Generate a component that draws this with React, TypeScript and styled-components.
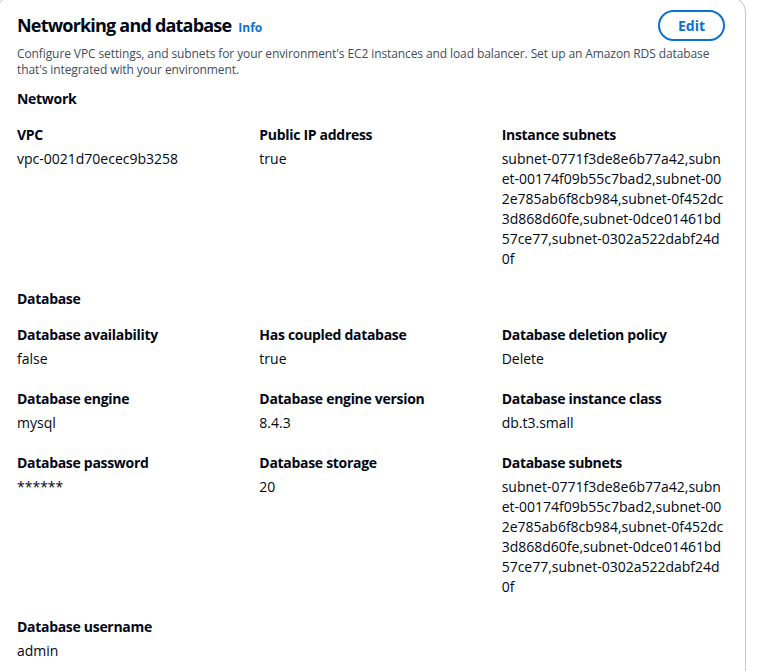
import React from 'react';
import styled, { createGlobalStyle } from 'styled-components';

const GlobalStyle = createGlobalStyle`
  html, body {
    margin: 0;
    padding: 0;
    background: #ffffff;
    overflow: hidden;
  }
  body {
    font-family: "Open Sans", "Noto Sans", Arial, sans-serif;
    color: #000716;
  }
`;

const Page = styled.div`
  padding: 0 20px 0 0;
`;

const Card = styled.section`
  margin: -4px 0 0 -4px;
  border: 1px solid #c6c6cd;
  border-radius: 16px;
  padding: 12px 21px 24px 20px;
  min-height: 700px;
`;

const Header = styled.div`
  display: flex;
  align-items: flex-start;
  justify-content: space-between;
`;

const TitleRow = styled.div`
  display: flex;
  align-items: baseline;
  gap: 7px;
  padding-top: 4px;
`;

const Title = styled.h2`
  margin: 0;
  font-size: 18px;
  line-height: 24px;
  font-weight: 700;
  letter-spacing: -0.8px;
`;

const InfoLink = styled.a`
  font-size: 12px;
  font-weight: 700;
  color: #0972d3;
  text-decoration: none;
`;

const Description = styled.p`
  margin: 5px 0 0;
  font-size: 12px;
  line-height: 16px;
  color: #414d5c;
  letter-spacing: -0.1px;
`;

const EditButton = styled.button`
  font-family: inherit;
  font-size: 14px;
  font-weight: 700;
  line-height: 19px;
  color: #0972d3;
  background: #ffffff;
  border: 2px solid #0972d3;
  border-radius: 20px;
  padding: 4px 18px;
  margin-top: 1px;
  margin-right: -1px;
  cursor: pointer;
`;

const SectionTitle = styled.h3<{ $first?: boolean }>`
  margin: ${(p) => (p.$first ? '11px' : '20px')} 0 16px;
  font-size: 14px;
  line-height: 20px;
  font-weight: 700;
  letter-spacing: -0.3px;
`;

const Grid = styled.div`
  display: grid;
  grid-template-columns: repeat(3, 1fr);
  column-gap: 20px;
  row-gap: 20px;
`;

const Pair = styled.div`
  display: flex;
  flex-direction: column;
  gap: 4px;
  min-width: 0;
`;

const Label = styled.div`
  font-size: 14px;
  line-height: 20px;
  font-weight: 700;
  letter-spacing: -0.3px;
`;

const Value = styled.div`
  font-size: 14px;
  line-height: 20px;
  word-break: break-all;
`;

const subnets =
  'subnet-0771f3de8e6b77a42,subnet-00174f09b55c7bad2,subnet-002e785ab6f8cb984,subnet-0f452dc3d868d60fe,subnet-0dce01461bd57ce77,subnet-0302a522dabf24d0f';

const network = [
  { label: 'VPC', value: 'vpc-0021d70ecec9b3258' },
  { label: 'Public IP address', value: 'true' },
  { label: 'Instance subnets', value: subnets },
];

const database = [
  { label: 'Database availability', value: 'false' },
  { label: 'Has coupled database', value: 'true' },
  { label: 'Database deletion policy', value: 'Delete' },
  { label: 'Database engine', value: 'mysql' },
  { label: 'Database engine version', value: '8.4.3' },
  { label: 'Database instance class', value: 'db.t3.small' },
  { label: 'Database password', value: '******' },
  { label: 'Database storage', value: '20' },
  { label: 'Database subnets', value: subnets },
  { label: 'Database username', value: 'admin' },
];

function Pairs({ items }: { items: { label: string; value: string }[] }) {
  return (
    <Grid>
      {items.map((it) => (
        <Pair key={it.label}>
          <Label>{it.label}</Label>
          <Value>{it.value}</Value>
        </Pair>
      ))}
    </Grid>
  );
}

export default function App() {
  return (
    <Page>
      <GlobalStyle />
      <Card>
        <Header>
          <TitleRow>
            <Title>Networking and database</Title>
            <InfoLink href="#">Info</InfoLink>
          </TitleRow>
          <EditButton>Edit</EditButton>
        </Header>
        <Description>
          Configure VPC settings, and subnets for your environment's EC2 instances and load
          balancer. Set up an Amazon RDS database that's integrated with your environment.
        </Description>
        <SectionTitle $first>Network</SectionTitle>
        <Pairs items={network} />
        <SectionTitle>Database</SectionTitle>
        <Pairs items={database} />
      </Card>
    </Page>
  );
}
